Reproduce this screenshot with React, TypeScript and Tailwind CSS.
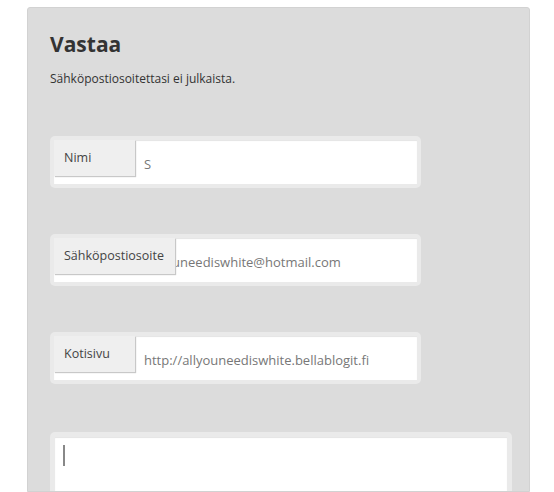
import React from 'react'

const font = { fontFamily: '"Open Sans", "DejaVu Sans", sans-serif' }

interface FieldProps {
  label: string
  value: string
}

function Field({ label, value }: FieldProps) {
  return (
    <div className="w-[371px] rounded-[5px] bg-[#eaeaea] p-[4px]">
      <div className="relative h-[44px] bg-white shadow-[inset_0_1px_1px_#e4e4e4]">
        <input
          readOnly
          value={value}
          className="h-full w-full bg-transparent pl-[90px] pr-2 pt-[3px] text-[13px] text-[#777] outline-none"
        />
        <label className="absolute left-0 top-0 flex h-[36px] min-w-[81px] items-center bg-[#efefef] pl-[10px] pr-[11px] text-[12.5px] text-[#444] shadow-[1px_1px_1px_#c8c8c8]">
          {label}
        </label>
      </div>
    </div>
  )
}

export default function App() {
  return (
    <div className="min-h-[492px] bg-white pt-[7px]" style={font}>
      <div className="ml-[27px] h-[485px] w-[503px] overflow-hidden rounded-t-[3px] border border-[#d2d2d2] bg-[#dcdcdc] px-[22px] pt-[22px]">
        <h2 className="text-[21px] font-bold leading-[28px] text-[#333]">Vastaa</h2>
        <p className="mt-[12px] text-[12px] leading-[18px] text-[#333]">
          Sähköpostiosoitettasi ei julkaista.
        </p>

        <div className="mt-[48px] flex flex-col gap-[46px]">
          <Field label="Nimi" value="S" />
          <Field label="Sähköpostiosoite" value="allyouneediswhite@hotmail.com" />
          <Field label="Kotisivu" value="http://allyouneediswhite.bellablogit.fi" />
        </div>

        <div className="mt-[48px] w-[462px] rounded-[5px] bg-[#eaeaea] p-[5px] pb-0">
          <div className="h-[80px] bg-white px-[8px] pt-[8px] shadow-[inset_0_1px_1px_#e4e4e4]">
            <span className="block h-[21px] w-[2px] bg-[#888]" />
          </div>
        </div>
      </div>
    </div>
  )
}
